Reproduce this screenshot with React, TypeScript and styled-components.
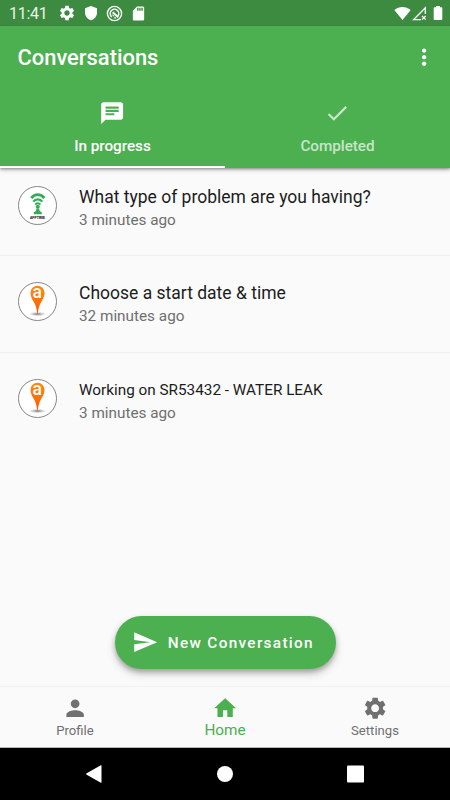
import React from "react";
import styled, { createGlobalStyle } from "styled-components";

const GREEN = "#4caf50";

const GlobalStyle = createGlobalStyle`
  * { box-sizing: border-box; }
  body { margin: 0; background: #fafafa; font-family: Roboto, "Liberation Sans", sans-serif; }
`;

const Screen = styled.div`
  width: 450px;
  height: 800px;
  display: flex;
  flex-direction: column;
  background: #fafafa;
  overflow: hidden;
`;

const StatusBar = styled.div`
  flex: none;
  height: 26px;
  display: flex;
  align-items: center;
  background: #3d8b40;
  color: #e9f3e9;
`;

const Clock = styled.span`
  width: 49px;
  margin-left: 9px;
  margin-top: 2px;
  font-size: 16px;
  line-height: 20px;
  letter-spacing: -0.25px;
`;

const StatusIcons = styled.div`
  display: flex;
  align-items: center;
  gap: 7px;
  color: #fff;
`;

const SignalIcons = styled(StatusIcons)`
  margin-left: auto;
  margin-right: 7px;
  gap: 1px;
`;

const BatterySlot = styled.div`
  display: flex;
  margin-left: 5px;
`;

const Header = styled.header`
  flex: none;
  height: 142px;
  display: flex;
  flex-direction: column;
  background: ${GREEN};
  color: #fff;
  box-shadow: 0 2px 4px rgba(0, 0, 0, 0.25), 0 1px 2px rgba(0, 0, 0, 0.25);
  z-index: 1;
`;

const Toolbar = styled.div`
  height: 62px;
  display: flex;
  align-items: center;
  justify-content: space-between;
  padding: 1px 13px 0 17.5px;
`;

const Title = styled.h1`
  margin: 0;
  font-size: 21.9px;
  line-height: 28px;
  font-weight: 500;
`;

const Tabs = styled.div`
  flex: 1;
  display: flex;
`;

const Tab = styled.div<{ $active?: boolean }>`
  flex: 1;
  display: flex;
  flex-direction: column;
  align-items: center;
  padding-top: 12px;
  color: ${(p) => (p.$active ? "#fff" : "rgba(255,255,255,0.7)")};
  border-bottom: 2px solid ${(p) => (p.$active ? "#fff" : GREEN)};
  font-size: 15.3px;
  line-height: 20px;
  font-weight: 500;
  letter-spacing: -0.04px;
`;

const TabLabel = styled.span`
  margin-top: 9.5px;
`;

const Content = styled.main`
  flex: 1;
  min-height: 0;
  display: flex;
  flex-direction: column;
  align-items: center;
`;

const List = styled.div`
  width: 100%;
  flex: 1;
`;

const Row = styled.div<{ $first?: boolean; $last?: boolean }>`
  height: ${(p) => (p.$first ? 88 : 97)}px;
  display: flex;
  padding: ${(p) => (p.$first ? 18 : p.$last ? 25.5 : 26)}px 18px 0;
  gap: 22px;
  border-bottom: ${(p) => (p.$last ? "none" : "1px solid #efefef")};
`;

const Avatar = styled.div`
  width: 39px;
  height: 39px;
  flex: none;
  border: 1px solid #858585;
  border-radius: 50%;
  background: #fff;
  overflow: hidden;
`;

const RowText = styled.div`
  display: flex;
  flex-direction: column;
  margin-top: -1px;
  white-space: nowrap;
`;

const RowTitle = styled.span<{ $small?: boolean }>`
  font-size: ${(p) => (p.$small ? 15.3 : 17.5)}px;
  line-height: 24px;
  letter-spacing: 0;
  color: #1c1c1c;
`;

const RowTime = styled.span`
  font-size: 15.3px;
  line-height: 20px;
  letter-spacing: 0;
  margin-top: 1px;
  color: #6f6f6f;
`;

const NewButton = styled.button`
  flex: none;
  width: 221px;
  height: 53px;
  margin: 0 0 17px;
  padding: 0 0 0 17px;
  display: flex;
  align-items: center;
  gap: 10px;
  border: 0;
  border-radius: 27px;
  background: ${GREEN};
  color: #fff;
  font-family: inherit;
  font-size: 15.3px;
  font-weight: 500;
  letter-spacing: 1.34px;
  white-space: nowrap;
  box-shadow: 0 3px 5px rgba(0, 0, 0, 0.25), 0 5px 10px rgba(0, 0, 0, 0.16);
`;

const BottomNav = styled.nav`
  flex: none;
  height: 62px;
  display: flex;
  background: #fafafa;
  border-top: 1px solid #f1f1f1;
  border-bottom: 1px solid #b5b5b5;
`;

const NavItem = styled.div<{ $active?: boolean }>`
  flex: 1;
  display: flex;
  flex-direction: column;
  align-items: center;
  padding-top: 8px;
  color: ${(p) => (p.$active ? GREEN : "#707070")};
  font-size: ${(p) => (p.$active ? 15.3 : 13.1)}px;
  line-height: 18px;
  letter-spacing: 0;
`;

const NavLabel = styled.span<{ $active?: boolean }>`
  margin-top: ${(p) => (p.$active ? 0 : 1)}px;
`;

const SystemNav = styled.div`
  flex: none;
  height: 52px;
  padding: 0 29px;
  display: flex;
  align-items: center;
  background: #000;
`;

const SystemKey = styled.div`
  flex: 1;
  display: flex;
  justify-content: center;
`;

const GEAR =
  "M19.14 12.94c.04-.3.06-.61.06-.94 0-.32-.02-.64-.07-.94l2.03-1.58c.18-.14.23-.41.12-.61l-1.92-3.32c-.12-.22-.37-.29-.59-.22l-2.39.96c-.5-.38-1.03-.7-1.62-.94l-.36-2.54c-.04-.24-.24-.41-.48-.41h-3.84c-.24 0-.43.17-.47.41l-.36 2.54c-.59.24-1.13.57-1.62.94l-2.39-.96c-.22-.08-.47 0-.59.22L2.74 8.87c-.12.21-.08.47.12.61l2.03 1.58c-.05.3-.09.63-.09.94s.02.64.07.94l-2.03 1.58c-.18.14-.23.41-.12.61l1.92 3.32c.12.22.37.29.59.22l2.39-.96c.5.38 1.03.7 1.62.94l.36 2.54c.05.24.24.41.48.41h3.84c.24 0 .44-.17.47-.41l.36-2.54c.59-.24 1.13-.56 1.62-.94l2.39.96c.22.08.47 0 .59-.22l1.92-3.32c.12-.22.07-.47-.12-.61l-2.01-1.58zM12 15.6c-1.98 0-3.6-1.62-3.6-3.6s1.62-3.6 3.6-3.6 3.6 1.62 3.6 3.6-1.62 3.6-3.6 3.6z";
const CHAT =
  "M20 2H4c-1.1 0-1.99.9-1.99 2L2 22l4-4h14c1.1 0 2-.9 2-2V4c0-1.1-.9-2-2-2zM6 9h12v2H6V9zm8 5H6v-2h8v2zm4-6H6V6h12v2z";
const CHECK = "M9 16.17L4.83 12l-1.42 1.41L9 19 21 7l-1.41-1.41z";
const MORE =
  "M12 8c1.1 0 2-.9 2-2s-.9-2-2-2-2 .9-2 2 .9 2 2 2zm0 2c-1.1 0-2 .9-2 2s.9 2 2 2 2-.9 2-2-.9-2-2-2zm0 6c-1.1 0-2 .9-2 2s.9 2 2 2 2-.9 2-2-.9-2-2-2z";
const SEND = "M2.01 21L23 12 2.01 3 2 10l15 2-15 2z";
const PERSON =
  "M12 12c2.21 0 4-1.79 4-4s-1.79-4-4-4-4 1.79-4 4 1.79 4 4 4zm0 2c-2.67 0-8 1.34-8 4v2h16v-2c0-2.66-5.33-4-8-4z";
const HOME = "M10 20v-6h4v6h5v-8h3L12 3 2 12h3v8z";
const SHIELD = "M12 1.500L3 5v6.500c0 5 3.800 9.800 9 11.300 5.200-1.500 9-6.300 9-11.300V5z";
const SD =
  "M18 2h-8L4.02 8 4 20c0 1.1.9 2 2 2h12c1.1 0 2-.9 2-2V4c0-1.1-.9-2-2-2zm-6 6h-2V4h2v4zm3 0h-2V4h2v4zm3 0h-2V4h2v4z";

const Icon = ({ d, size = 26.25 }: { d: string; size?: number }) => (
  <svg width={size} height={size} viewBox="0 0 24 24" fill="currentColor">
    <path d={d} />
  </svg>
);

const AndroidCircle = () => (
  <svg width="17" height="17" viewBox="0 0 17 17" fill="none" stroke="currentColor">
    <circle cx="8.500" cy="8.500" r="7.100" strokeWidth="1.400" />
    <path d="M12 11a4.300 4.300 0 1 0-6.200.900M8.200 12.800a4.300 4.300 0 0 0 1.500-.1" strokeWidth="1.500" />
    <path d="M6.700 7.200l5.500 5" strokeWidth="2" />
    <path d="M6.200 9.500q.6 1.600 2.100 1.500" strokeWidth="1" />
  </svg>
);

const Wifi = () => (
  <svg width="17" height="15" viewBox="0 0 17 15" fill="currentColor">
    <path d="M.3 4C5 -.1 12 -.1 16.700 4L8.500 14z" />
  </svg>
);

const Signal = () => (
  <svg width="15" height="15" viewBox="0 0 15 15" fill="none" stroke="currentColor">
    <path d="M13.300 8V1.900L1.500 13.700H9" strokeWidth="1.300" />
    <path d="M10 10l3.700 3.700m0-3.700L10 13.700" strokeWidth="1.200" />
  </svg>
);

const Battery = () => (
  <svg width="10" height="16" viewBox="0 0 10 16" fill="currentColor">
    <path d="M3 1h4v1.300h1.500q.8 0 .8.800v11q0 .8-.8.800h-7q-.8 0-.8-.8v-11q0-.8.800-.8H3z" />
  </svg>
);

const SignalTree = () => (
  <svg width="37" height="37" viewBox="0 0 37 37">
    <g fill="none" stroke="#35ad58">
      <path d="M12.300 11.100c3.400-4.700 9.600-4.700 13 0" strokeWidth="2.800" />
      <path d="M14.300 14.600c2.300-3.100 6.700-3.100 9 0" strokeWidth="2.300" />
      <path d="M16.200 17.600c1.300-1.700 3.900-1.700 5.200 0" strokeWidth="2" />
    </g>
    <circle cx="18.800" cy="19.800" r="2" fill="#35ad58" />
    <path d="M17.500 21.500h2.600l.6 2.500 2.100 1.300v1.900h-8v-1.900l2.100-1.300z" fill="#35ad58" />
    <text
      x="18.500"
      y="31.800"
      textAnchor="middle"
      fontSize="4.400"
      fontWeight="900"
      textLength="15"
      lengthAdjust="spacingAndGlyphs"
      fill="#111"
      fontFamily="Roboto, sans-serif"
    >
      APPTREE
    </text>
  </svg>
);

const MapPin = () => (
  <svg width="37" height="37" viewBox="0 0 37 37">
    <defs>
      <linearGradient id="pin" x2="0" y2="1">
        <stop offset="0" stopColor="#ff8a0c" />
        <stop offset="1" stopColor="#fb5b05" />
      </linearGradient>
      <radialGradient id="ground">
        <stop offset="0" stopColor="#555" stopOpacity=".85" />
        <stop offset="1" stopColor="#aaa" stopOpacity="0" />
      </radialGradient>
    </defs>
    <ellipse cx="18.500" cy="31" rx="9" ry="2.300" fill="url(#ground)" />
    <path
      d="M18.500 31.500c-.7-3-1-7.800-3.100-11.500C13.300 16.800 11.500 13.500 11.500 9.800a7 7 0 0 1 14 0c0 3.700-1.800 7-3.900 10.200-2.100 3.700-2.400 8.500-3.100 11.500z"
      fill="url(#pin)"
    />
    <text
      x="18.300"
      y="14.500"
      textAnchor="middle"
      fontSize="17.500"
      fontWeight="500"
      fill="#fff"
      fontFamily="Roboto, sans-serif"
    >
      a
    </text>
  </svg>
);

const conversations = [
  { title: "What type of problem are you having?", time: "3 minutes ago", tree: true },
  { title: "Choose a start date & time", time: "32 minutes ago" },
  { title: "Working on SR53432 - WATER LEAK", time: "3 minutes ago", small: true },
];

export default function App() {
  return (
    <>
      <GlobalStyle />
      <Screen>
        <StatusBar>
          <Clock>11:41</Clock>
          <StatusIcons>
            <Icon d={GEAR} size={18} />
            <Icon d={SHIELD} size={16} />
            <AndroidCircle />
            <Icon d={SD} size={17} />
          </StatusIcons>
          <SignalIcons>
            <Wifi />
            <Signal />
            <BatterySlot>
              <Battery />
            </BatterySlot>
          </SignalIcons>
        </StatusBar>
        <Header>
          <Toolbar>
            <Title>Conversations</Title>
            <Icon d={MORE} />
          </Toolbar>
          <Tabs>
            <Tab $active>
              <Icon d={CHAT} />
              <TabLabel>In progress</TabLabel>
            </Tab>
            <Tab>
              <Icon d={CHECK} />
              <TabLabel>Completed</TabLabel>
            </Tab>
          </Tabs>
        </Header>
        <Content>
          <List>
            {conversations.map((c, i) => (
              <Row key={i} $first={i === 0} $last={i === 2}>
                <Avatar>{c.tree ? <SignalTree /> : <MapPin />}</Avatar>
                <RowText>
                  <RowTitle $small={c.small}>{c.title}</RowTitle>
                  <RowTime>{c.time}</RowTime>
                </RowText>
              </Row>
            ))}
          </List>
          <NewButton>
            <Icon d={SEND} />
            New Conversation
          </NewButton>
        </Content>
        <BottomNav>
          <NavItem>
            <Icon d={PERSON} />
            <NavLabel>Profile</NavLabel>
          </NavItem>
          <NavItem $active>
            <Icon d={HOME} />
            <NavLabel $active>Home</NavLabel>
          </NavItem>
          <NavItem>
            <Icon d={GEAR} />
            <NavLabel>Settings</NavLabel>
          </NavItem>
        </BottomNav>
        <SystemNav>
          <SystemKey>
            <svg width="18" height="20" viewBox="0 0 18 20" fill="#fff">
              <path d="M16.500 1.600v16.800q0 .7-.7.300L1.300 10.400q-.5-.4 0-.8L15.800 1.300q.7-.4.700.3z" />
            </svg>
          </SystemKey>
          <SystemKey>
            <svg width="18" height="18" viewBox="0 0 18 18" fill="#fff">
              <circle cx="9" cy="9" r="8" />
            </svg>
          </SystemKey>
          <SystemKey>
            <svg width="18" height="18" viewBox="0 0 18 18" fill="#fff">
              <rect x="0" y=".5" width="17" height="17" rx="1" />
            </svg>
          </SystemKey>
        </SystemNav>
      </Screen>
    </>
  );
}
